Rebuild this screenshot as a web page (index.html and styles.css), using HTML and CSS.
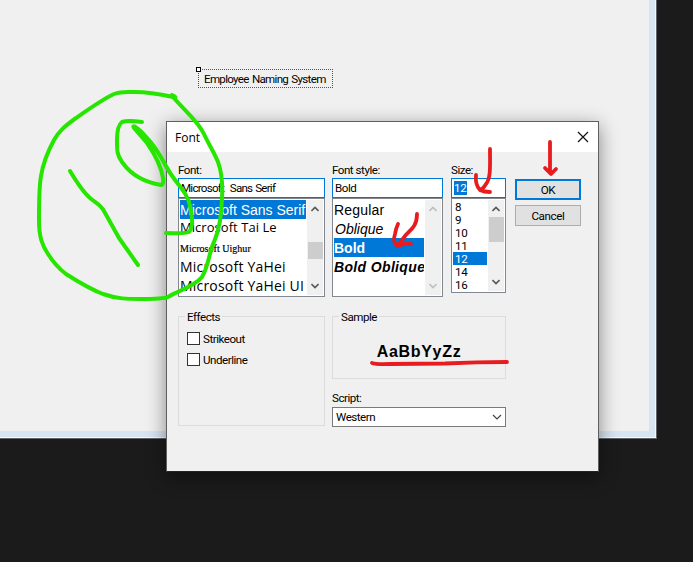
FILE: index.html
```html
<!DOCTYPE html>
<html lang="en">
<head>
<meta charset="utf-8">
<title>Font</title>
<link rel="stylesheet" href="styles.css">
</head>
<body>
<main class="desktop">
  <section class="form-window"></section>
  <div class="designer-label"><i class="handle"></i><span class="emp">Employee Naming System</span></div>

  <section class="dialog">
    <header class="titlebar">
      <span class="title">Font</span>
      <svg class="close" width="12" height="12" viewBox="0 0 12 12"><path d="M1 1L11 11M11 1L1 11"/></svg>
    </header>
    <div class="content">
      <div class="top-row">
        <div class="field font-field">
          <label>Font:</label>
          <div class="input"><span class="f-name">Microsoft&nbsp; Sans Serif</span></div>
          <div class="list">
            <ul class="rows">
              <li class="selected"><span class="mss">Microsoft Sans Serif</span></li>
              <li><span class="taile">Microsoft Tai Le</span></li>
              <li><span class="uighur">Microsoft Uighur</span></li>
              <li><span class="yahei">Microsoft YaHei</span></li>
              <li><span class="yahei">Microsoft YaHei UI</span></li>
            </ul>
            <div class="scroll">
              <svg class="arrow" viewBox="0 0 8 6"><path d="M.4 5L4 1.4L7.6 5"/></svg>
              <i class="thumb thumb-font"></i>
              <svg class="arrow" viewBox="0 0 8 6"><path d="M.4 1L4 4.6L7.6 1"/></svg>
            </div>
          </div>
        </div>
        <div class="field style-field">
          <label>Font style:</label>
          <div class="input">Bold</div>
          <div class="list">
            <ul class="rows">
              <li><span class="regular">Regular</span></li>
              <li><span class="oblique">Oblique</span></li>
              <li class="selected"><span class="bold">Bold</span></li>
              <li><span class="bold-oblique">Bold Oblique</span></li>
            </ul>
            <div class="scroll disabled">
              <svg class="arrow" viewBox="0 0 8 6"><path d="M.4 5L4 1.4L7.6 5"/></svg>
              <svg class="arrow" viewBox="0 0 8 6"><path d="M.4 1L4 4.6L7.6 1"/></svg>
            </div>
          </div>
        </div>
        <div class="field size-field">
          <label>Size:</label>
          <div class="input"><span class="marked">12</span></div>
          <div class="list">
            <ul class="rows">
              <li>8</li><li>9</li><li>10</li><li>11</li><li class="selected">12</li><li>14</li><li>16</li>
            </ul>
            <div class="scroll">
              <svg class="arrow" viewBox="0 0 8 6"><path d="M.4 5L4 1.4L7.6 5"/></svg>
              <i class="thumb thumb-size"></i>
              <svg class="arrow" viewBox="0 0 8 6"><path d="M.4 1L4 4.6L7.6 1"/></svg>
            </div>
          </div>
        </div>
        <div class="buttons">
          <div class="button default">OK</div>
          <div class="button">Cancel</div>
        </div>
      </div>
      <div class="bottom-row">
        <div class="group effects">
          <span class="legend">Effects</span>
          <div class="check"><i class="box"></i>Strikeout</div>
          <div class="check"><i class="box"></i>Underline</div>
        </div>
        <div class="right">
          <div class="group sample">
            <span class="legend">Sample</span>
            <div class="preview">AaBbYyZz</div>
          </div>
          <label class="script-label">Script:</label>
          <div class="select"><span>Western</span>
            <svg width="10" height="6" viewBox="0 0 10 6"><path d="M1 1L5 5L9 1"/></svg>
          </div>
        </div>
      </div>
    </div>
  </section>

  <svg class="ink" viewBox="0 0 693 562">
    <g class="green">
      <path d="M172 95Q178 98 173 97C159 94 148 92 135 92C127 92 122 91 114 94C103 99 86 111 76 118C65 126 59 131 54 140C48 151 43 164 41 176C39 187 39 207 39 220C39 237 42 245 48 254C53 262 58 268 66 274C80 283 90 289 103 294C117 299 128 299 140 299C152 299 164 299 168 297C180 290 195 286 202 277C209 265 209 252 214 242C220 228 221 216 222 199C223 182 221 170 218 162C214 152 208 143 204 134C198 121 185 111 173 97"/>
      <path d="M142 122C134 121 125 121 122 122C118 125 117 133 117 140C117 151 117 155 122 162C127 169 132 174 140 178C147 182 155 184 161 185C163 185 164 181 163 178C161 165 154 153 147 143L134 128C131 124 138 127 147 138C154 145 160 155 166 166C174 182 188 192 190 206C192 216 194 226 189 232C184 234 175 233 166 233"/>
      <path d="M70 171C76 181 83 192 90 198C96 203 101 205 104 211L119 238L138 265"/>
    </g>
    <g class="red">
      <path d="M490 149C490 165 491 178 486 184Q483 189 480 190Q475 185 476 175M480 190Q484 192 490 192"/>
      <path d="M550 142L550 173M545 168L551 174L556 169"/>
      <path d="M417 214C417 227 410 230 405 236Q401 241 398 246Q392 243 395 234Q396 228 398 224M398 246Q404 243 411 244"/>
      <path d="M372 363Q376 364.5 390 364L445 363.5Q477 362 507 362"/>
    </g>
  </svg>
</main>
</body>
</html>
```

FILE: styles.css
```css
*, *::before, *::after { box-sizing: border-box; }
body { margin: 0; font-family: Roboto, "Liberation Sans", sans-serif; font-size: 11.6px; letter-spacing: -.48px; color: #000; }
.desktop { position: relative; width: 693px; height: 562px; overflow: hidden; background: #1b1b1b; }
.form-window {
  width: 657px; height: 439px; background: #f0f0f0;
  border: solid #606468; border-width: 0 1px 1px 0;
  box-shadow: inset -1px -1px #f4f8fc, inset -7px -7px #d7e4f1;
}
.designer-label {
  position: absolute; left: 198px; top: 69px; width: 135px; height: 19px;
  border: 1px dotted #555; padding: 2px 0 0 5px; line-height: 15px; white-space: nowrap;
}
.handle { position: absolute; left: -3px; top: -3px; width: 5px; height: 5px; background: #fff; border: 1px solid #000; }
.emp { letter-spacing: -.7px; word-spacing: 1px; }

.dialog {
  position: absolute; left: 166px; top: 121px; width: 433px; height: 351px;
  background: #f0f0f0; border: 1px solid #5f5f5f; border-bottom-color: #222;
  box-shadow: 0 5px 18px rgba(0,0,0,.45);
}
.titlebar { height: 30px; padding: 0 9px 0 8px; background: #fff; display: flex; align-items: center; justify-content: space-between; }
.title { font-family: "Open Sans", sans-serif; font-size: 12px; letter-spacing: 0; }
.close path { stroke: #111; stroke-width: 1.2; fill: none; }
.content { padding: 10px 11px 0; }
.top-row { display: flex; height: 135px; }
.field label { display: block; height: 16px; line-height: 16px; white-space: nowrap; }
.font-field { width: 147px; margin-right: 7px; }
.style-field { width: 111px; margin-right: 8px; }
.size-field { width: 55px; margin-right: 9px; }
.input { height: 20px; border: 1px solid #0078d7; background: #fff; padding: 0 2px; line-height: 18px; white-space: nowrap; }
.f-name { letter-spacing: -.75px; word-spacing: .7px; }
.marked { display: inline-block; width: 13px; height: 14px; line-height: 14px; color: #fff; background: #0078d7; letter-spacing: -.2px; }
.list { height: 99px; display: flex; padding: 1px; border: 1px solid #828790; background: #fff; overflow: hidden; letter-spacing: 0; font-family: "Liberation Sans", sans-serif; }
.rows { flex: 1; min-width: 0; margin: 0; padding: 0; list-style: none; overflow: hidden; }
.rows li { height: 19px; line-height: 20px; white-space: nowrap; overflow: hidden; }
.rows .selected { background: #0078d7; color: #fff; }
.mss { font-size: 14px; letter-spacing: 0; }
.taile { font-family: "Open Sans", sans-serif; font-size: 13px; line-height: 17px; display: block; letter-spacing: .05px; }
.uighur { font-family: "Liberation Serif", serif; font-size: 10px; letter-spacing: .03px; -webkit-text-stroke: .2px #000; }
.yahei { font-family: "Open Sans", "Noto Sans", sans-serif; font-size: 14px; letter-spacing: .2px; }
.regular { font-size: 14px; letter-spacing: .2px; }
.oblique { font-size: 14px; font-style: italic; padding-left: 1px; }
.bold { font-size: 14px; font-weight: bold; }
.bold-oblique { font-size: 14px; font-weight: bold; font-style: italic; letter-spacing: .35px; }
.scroll { width: 16px; background: #f0f0f0; display: flex; flex-direction: column; align-items: center; justify-content: space-between; padding: 6px 0; margin-left: 1px; }
.size-field .scroll { margin-left: 0; }
.arrow { width: 8px; height: 6px; }
.arrow path { fill: none; stroke: #585858; stroke-width: 1.7; }
.disabled .arrow path { stroke: #bfbfbf; }
.thumb { width: 15px; background: #cdcdcd; }
.thumb-font { height: 17px; margin-top: 10px; margin-bottom: 5px; }
.thumb-size { height: 25px; margin-bottom: 33px; }
.size-field .list { height: 95px; font-family: Roboto, sans-serif; letter-spacing: -.3px; }
.size-field .rows li { height: 13px; line-height: 14px; padding-left: 2px; }
.size-field .selected { margin-right: 1px; }
.buttons { width: 66px; padding-top: 17px; }
.button { height: 21px; line-height: 20px; border: 1px solid #adadad; background: #e1e1e1; text-align: center; margin-bottom: 5px; letter-spacing: -.35px; }
.default { border: 2px solid #0078d7; line-height: 18px; }
.bottom-row { display: flex; gap: 7px; padding-top: 19px; }
.group { border: 1px solid #dcdcdc; }
.effects { width: 147px; height: 110px; padding: 0 8px; }
.legend { display: block; width: max-content; height: 14px; line-height: 14px; background: #f0f0f0; margin: -7px 0 0 6px; padding: 0 2px; }
.effects .legend { margin-left: -2px; }
.check { display: flex; align-items: center; gap: 3px; height: 13px; margin-top: 8px; }
.box { width: 13px; height: 13px; background: #fff; border: 1px solid #333; }
.right { width: 174px; }
.sample { height: 63px; }
.preview { font-family: "Liberation Sans", sans-serif; text-align: center; font-size: 16px; font-weight: bold; line-height: 20px; margin-top: 18px; letter-spacing: .7px; }
.script-label { display: block; height: 28px; line-height: 15px; padding-top: 12px; }
.select { height: 20px; border: 1px solid #7a7a7a; background: #fff; display: flex; justify-content: space-between; align-items: center; padding: 0 3px; }
.select path { fill: none; stroke: #444; stroke-width: 1.2; }
.ink { position: absolute; left: 0; top: 0; width: 693px; height: 562px; }
.ink path { fill: none; stroke-linecap: round; stroke-linejoin: round; }
.green path { stroke: #26e600; stroke-width: 4; }
.red path { stroke: #e81b1e; stroke-width: 3.8; }
```
